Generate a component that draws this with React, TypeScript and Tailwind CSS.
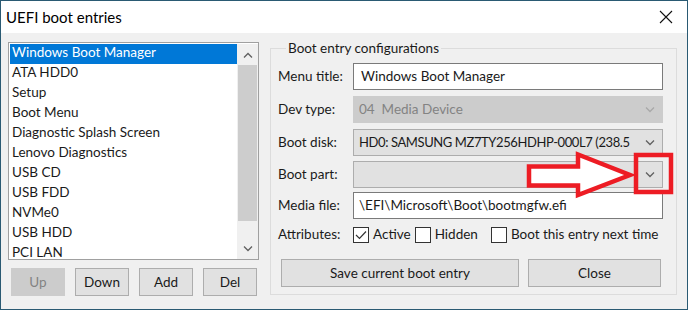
import React from 'react';

const items = [
  'Windows Boot Manager',
  'ATA HDD0',
  'Setup',
  'Boot Menu',
  'Diagnostic Splash Screen',
  'Lenovo Diagnostics',
  'USB CD',
  'USB FDD',
  'NVMe0',
  'USB HDD',
  'PCI LAN',
];

function Chevron({ up = false, color = '#606060' }: { up?: boolean; color?: string }) {
  return (
    <svg width="10" height="6" viewBox="0 0 10 6" className="shrink-0">
      <path d={up ? 'M1 5.5 L5 1.5 L9 5.5' : 'M1 0.5 L5 4.5 L9 0.5'} fill="none" stroke={color} strokeWidth="1.3" />
    </svg>
  );
}

function Combo({ text, disabled = false, tight = false }: { text?: string; disabled?: boolean; tight?: boolean }) {
  return (
    <div
      className={
        'flex h-[27px] w-[310px] shrink-0 items-center justify-between overflow-hidden border pl-[5px] pr-[7px] ' +
        (disabled ? 'border-[#cccccc] bg-[#cccccc] text-[#838383]' : 'border-[#adadad] bg-[#e1e1e1] text-[#1a1a1a]')
      }
    >
      <span className={'overflow-hidden whitespace-pre ' + (tight ? 'text-[13px] tracking-[-0.4px]' : '')}>{text}</span>
      <Chevron color={disabled ? '#a8a8a8' : '#606060'} />
    </div>
  );
}

function CheckBox({ checked = false, label }: { checked?: boolean; label: string }) {
  return (
    <div className="flex shrink-0 items-center gap-[4px] whitespace-nowrap">
      <div className="flex h-[16px] w-[16px] shrink-0 items-center justify-center border border-[#333333] bg-white">
        {checked && (
          <svg width="12" height="10" viewBox="0 0 12 10">
            <path d="M1 5 L4.5 8.5 L11 1.5" fill="none" stroke="#333333" strokeWidth="1.2" />
          </svg>
        )}
      </div>
      <span>{label}</span>
    </div>
  );
}

function Btn({ label, disabled = false, w }: { label: string; disabled?: boolean; w: string }) {
  return (
    <div
      className={
        'flex h-[28px] items-center justify-center border ' +
        w +
        (disabled ? ' border-[#cccccc] bg-[#cccccc] text-[#838383]' : ' border-[#adadad] bg-[#e1e1e1] text-[#1a1a1a]')
      }
    >
      {label}
    </div>
  );
}

export default function App() {
  return (
    <div
      className="relative flex h-[310px] w-[688px] flex-col overflow-hidden border border-[#2a5a73] bg-[#f0f0f0] text-[13.5px] text-[#1a1a1a]"
      style={{ fontFamily: 'Lato, sans-serif' }}
    >
      {/* title bar */}
      <div className="flex h-[32px] shrink-0 items-center justify-between bg-white pl-[5px] pr-[14px]">
        <span className="text-[15px] text-black">UEFI boot entries</span>
        <svg width="14" height="14" viewBox="0 0 14 14">
          <path d="M1 1 L13 13 M13 1 L1 13" stroke="#111111" strokeWidth="1.1" />
        </svg>
      </div>

      <div className="flex flex-1">
        {/* left: list + buttons */}
        <div className="flex w-[262px] shrink-0 flex-col pl-[7px] pt-[9px]">
          <div className="flex h-[218px] w-[251px] border border-[#a0a0a0] bg-white pl-[1px] pt-[1px]">
            <div className="flex-1 overflow-hidden">
              {items.map((it, i) => (
                <div
                  key={it}
                  className={
                    'flex h-[20px] items-center px-[2px] pb-[2px] leading-none ' +
                    (i === 0 ? 'bg-[#0078d7] text-white' : 'text-[#1a1a1a]')
                  }
                >
                  {it}
                </div>
              ))}
            </div>
            <div className="flex w-[21px] flex-col bg-[#f0f0f0]">
              <div className="flex h-[21px] items-center justify-center">
                <Chevron up />
              </div>
              <div className="mx-[1px] h-[156px] bg-[#cdcdcd]" />
              <div className="flex-1" />
              <div className="flex h-[21px] items-center justify-center">
                <Chevron />
              </div>
            </div>
          </div>
          <div className="mt-[8px] flex gap-[10px] pl-[3px]">
            <Btn label="Up" disabled w="w-[54px]" />
            <Btn label="Down" w="w-[54px]" />
            <Btn label="Add" w="w-[54px]" />
            <Btn label="Del" w="w-[54px]" />
          </div>
        </div>

        {/* right: group box */}
        <div className="pl-[7px] pt-[4px]">
          <fieldset className="h-[258px] w-[407px] min-w-0 border border-[#dcdcdc] pl-[7px] pr-[13px]">
            <legend className="ml-[8px] px-[2px] leading-[22px]">Boot entry configurations</legend>
            <div className="mt-[4px] flex h-[27px] items-center justify-between">
              <span>Menu title:</span>
              <div className="flex h-[27px] w-[310px] shrink-0 items-center border border-[#7a7a7a] bg-white pl-[7px]">
                Windows Boot Manager
              </div>
            </div>
            <div className="mt-[6px] flex items-center justify-between">
              <span>Dev type:</span>
              <Combo text="04  Media Device" disabled />
            </div>
            <div className="mt-[6px] flex items-center justify-between">
              <span>Boot disk:</span>
              <Combo text="HD0: SAMSUNG MZ7TY256HDHP-000L7 (238.5" tight />
            </div>
            <div className="mt-[5px] flex items-center justify-between">
              <span>Boot part:</span>
              <Combo />
            </div>
            <div className="mt-[4px] flex h-[27px] items-center justify-between">
              <span>Media file:</span>
              <div className="flex h-[27px] w-[310px] shrink-0 items-center border border-[#7a7a7a] bg-white pl-[5px]">
                \EFI\Microsoft\Boot\bootmgfw.efi
              </div>
            </div>
            <div className="mt-[7px] flex h-[17px] items-center">
              <span className="w-[75px] shrink-0">Attributes:</span>
              <CheckBox checked label="Active" />
              <div className="w-[4px] shrink-0" />
              <CheckBox label="Hidden" />
              <div className="w-[13px] shrink-0" />
              <CheckBox label="Boot this entry next time" />
            </div>
            <div className="mt-[16px] flex gap-[9px] pl-[3px]">
              <Btn label="Save current boot entry" w="w-[238px]" />
              <Btn label="Close" w="w-[133px]" />
            </div>
          </fieldset>
        </div>
      </div>

      {/* red annotation overlay */}
      <svg className="absolute left-[519px] top-[144px]" width="160" height="56" viewBox="519 144 160 56">
        <polygon
          points="528,165.5 577,165.5 577,153.5 629,174 577,194 577,184.5 528,184.5"
          fill="white"
          stroke="#ed1c24"
          strokeWidth="4.5"
          strokeLinejoin="miter"
        />
        <rect x="635" y="154" width="35" height="37" fill="none" stroke="#ed1c24" strokeWidth="4.5" />
      </svg>
    </div>
  );
}
